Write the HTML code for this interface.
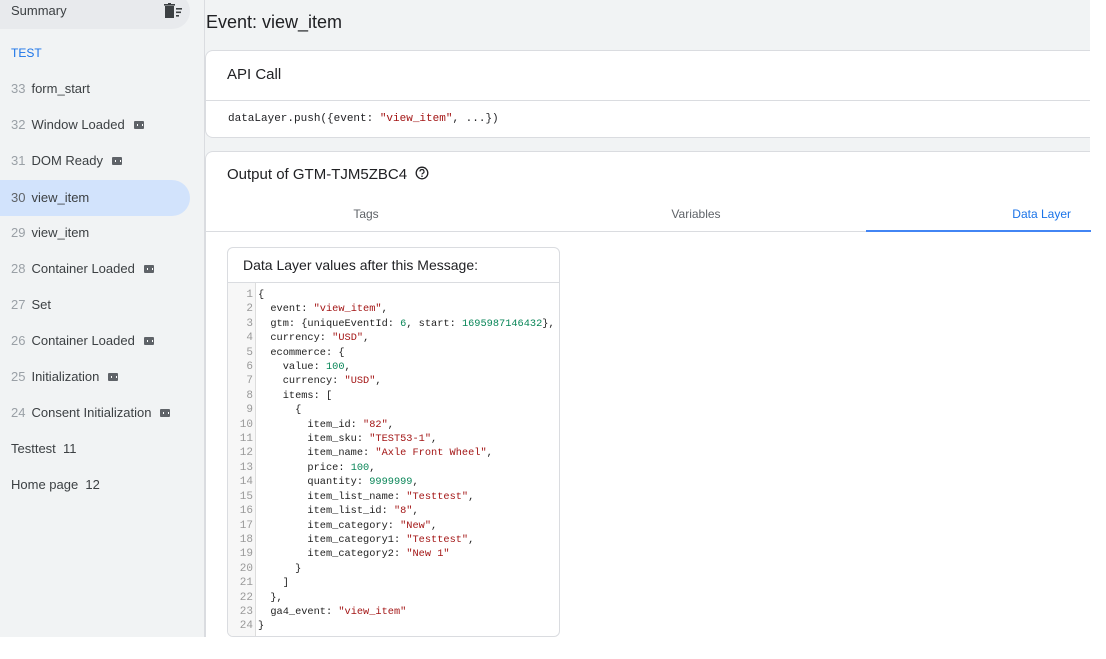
<!DOCTYPE html>
<html><head><meta charset="utf-8"><style>
*{box-sizing:border-box;margin:0;padding:0}
body{width:1106px;height:659px;overflow:hidden;background:#fff;font-family:"Liberation Sans",Arial,sans-serif;position:relative}
#side{position:absolute;left:0;top:0;width:205px;height:637px;background:#f1f3f4;border-right:1px solid #dadce0}
.it{position:absolute;left:0;width:190px;height:36px;line-height:36px;padding-left:11px;font-size:13px;color:#3c4043;border-radius:0 18px 18px 0}
.it .n{color:#9aa0a6;margin-right:6px}
.ic{display:inline-block;width:10px;height:8px;background:#5f6368;border-radius:1px;margin-left:9px;vertical-align:middle;position:relative;top:-1px}
.ic:before{content:"";position:absolute;left:3px;top:3px;width:4px;height:2px;border-left:1px solid #fff;border-right:1px solid #fff}
#main{position:absolute;left:205px;top:0;width:885px;height:637px;background:#f1f3f4}
.card{position:absolute;left:0;width:885px;background:#fff;border:1px solid #dadce0;border-right:none;border-radius:8px 0 0 8px}
.mono{font-family:"Liberation Mono",Consolas,monospace}
.k{color:#1e1e1e}.s{color:#a31515}.d{color:#098658}
</style></head><body>
<div id="side">
<div class="it" style="top:-7px;background:#e8eaed;height:36px;line-height:36px">Summary<svg style="position:absolute;left:163px;top:10px" width="20" height="16" viewBox="0 0 20 16"><rect x="2" y="3" width="9" height="12" fill="#3c4043"/><rect x="1" y="1" width="11" height="1.6" fill="#3c4043"/><rect x="5" y="0" width="3" height="1.5" fill="#3c4043"/><rect x="13" y="5" width="6" height="1.6" fill="#3c4043"/><rect x="13" y="8.5" width="5" height="1.6" fill="#3c4043"/><rect x="13" y="12" width="3" height="1.6" fill="#3c4043"/></svg></div>
<div class="it" style="top:35px;color:#1a73e8;font-size:12px">TEST</div>
<div class="it" style="top:71px"><span class="n">33</span>form_start</div>
<div class="it" style="top:107px"><span class="n">32</span>Window Loaded<span class="ic"></span></div>
<div class="it" style="top:143px"><span class="n">31</span>DOM Ready<span class="ic"></span></div>
<div class="it" style="top:180px;background:#d2e3fc"><span class="n" style="color:#5f6368">30</span>view_item</div>
<div class="it" style="top:215px"><span class="n">29</span>view_item</div>
<div class="it" style="top:251px"><span class="n">28</span>Container Loaded<span class="ic"></span></div>
<div class="it" style="top:287px"><span class="n">27</span>Set</div>
<div class="it" style="top:323px"><span class="n">26</span>Container Loaded<span class="ic"></span></div>
<div class="it" style="top:359px"><span class="n">25</span>Initialization<span class="ic"></span></div>
<div class="it" style="top:395px"><span class="n">24</span>Consent Initialization<span class="ic"></span></div>
<div class="it" style="top:431px">Testtest&nbsp; 11</div>
<div class="it" style="top:467px">Home page&nbsp; 12</div>
</div>
<div id="main">
<div style="position:absolute;left:1px;top:12px;font-size:18px;color:#202124">Event: view_item</div>
<div class="card" style="top:50px;height:88px">
<div style="height:50px;line-height:48px;padding-left:21px;font-size:15px;color:#202124;border-bottom:1px solid #dadce0">API Call</div>
<div class="mono" style="padding-left:22px;line-height:36px;font-size:11px;color:#202124">dataLayer.push({event: <span class="s">"view_item"</span>, ...})</div>
</div>
<div class="card" style="top:151px;height:486px;border-bottom:none;border-radius:8px 0 0 0">
<div style="position:absolute;left:21px;top:14px;font-size:15px;color:#202124">Output of GTM-TJM5ZBC4 <svg width="14" height="14" viewBox="0 0 14 14" style="vertical-align:-1px;margin-left:4px"><circle cx="7" cy="7" r="5.8" fill="none" stroke="#202124" stroke-width="1.3"/><path d="M5 5.5a2 2 0 1 1 2.6 1.9c-.5.2-.6.5-.6 1.1" fill="none" stroke="#202124" stroke-width="1.2"/><circle cx="7" cy="10.2" r=".8" fill="#202124"/></svg></div>
<div style="position:absolute;left:0;top:44px;width:885px;height:36px;border-bottom:1px solid #dadce0;font-size:12px;color:#5f6368">
<div style="position:absolute;left:0;width:320px;text-align:center;line-height:36px">Tags</div>
<div style="position:absolute;left:330px;width:320px;text-align:center;line-height:36px">Variables</div>
<div style="position:absolute;left:660px;width:225px;text-align:right;padding-right:20px;line-height:36px;color:#1a73e8;border-bottom:2px solid #4285f4;height:36px">Data Layer</div>
</div>
<div style="position:absolute;left:21px;top:95px;width:333px;height:390px;border:1px solid #dadce0;border-radius:6px;overflow:hidden">
<div style="height:35px;line-height:34px;padding-left:15px;font-size:14px;color:#202124;border-bottom:1px solid #dadce0">Data Layer values after this Message:</div>
<div style="position:absolute;left:0;top:35px;width:28px;height:360px;background:#f7f7f7;border-right:1px solid #ddd"></div>
<pre class="mono" style="position:absolute;left:0;top:40px;font-size:11px;line-height:14.4px;color:#999;width:25px;text-align:right">1
2
3
4
5
6
7
8
9
10
11
12
13
14
15
16
17
18
19
20
21
22
23
24</pre>
<pre class="mono k" style="position:absolute;left:30px;top:40px;font-size:10.3px;line-height:14.4px">{
  event: <span class="s">"view_item"</span>,
  gtm: {uniqueEventId: <span class="d">6</span>, start: <span class="d">1695987146432</span>},
  currency: <span class="s">"USD"</span>,
  ecommerce: {
    value: <span class="d">100</span>,
    currency: <span class="s">"USD"</span>,
    items: [
      {
        item_id: <span class="s">"82"</span>,
        item_sku: <span class="s">"TEST53-1"</span>,
        item_name: <span class="s">"Axle Front Wheel"</span>,
        price: <span class="d">100</span>,
        quantity: <span class="d">9999999</span>,
        item_list_name: <span class="s">"Testtest"</span>,
        item_list_id: <span class="s">"8"</span>,
        item_category: <span class="s">"New"</span>,
        item_category1: <span class="s">"Testtest"</span>,
        item_category2: <span class="s">"New 1"</span>
      }
    ]
  },
  ga4_event: <span class="s">"view_item"</span>
}</pre>
</div>
</div>
</div>
</body></html>
